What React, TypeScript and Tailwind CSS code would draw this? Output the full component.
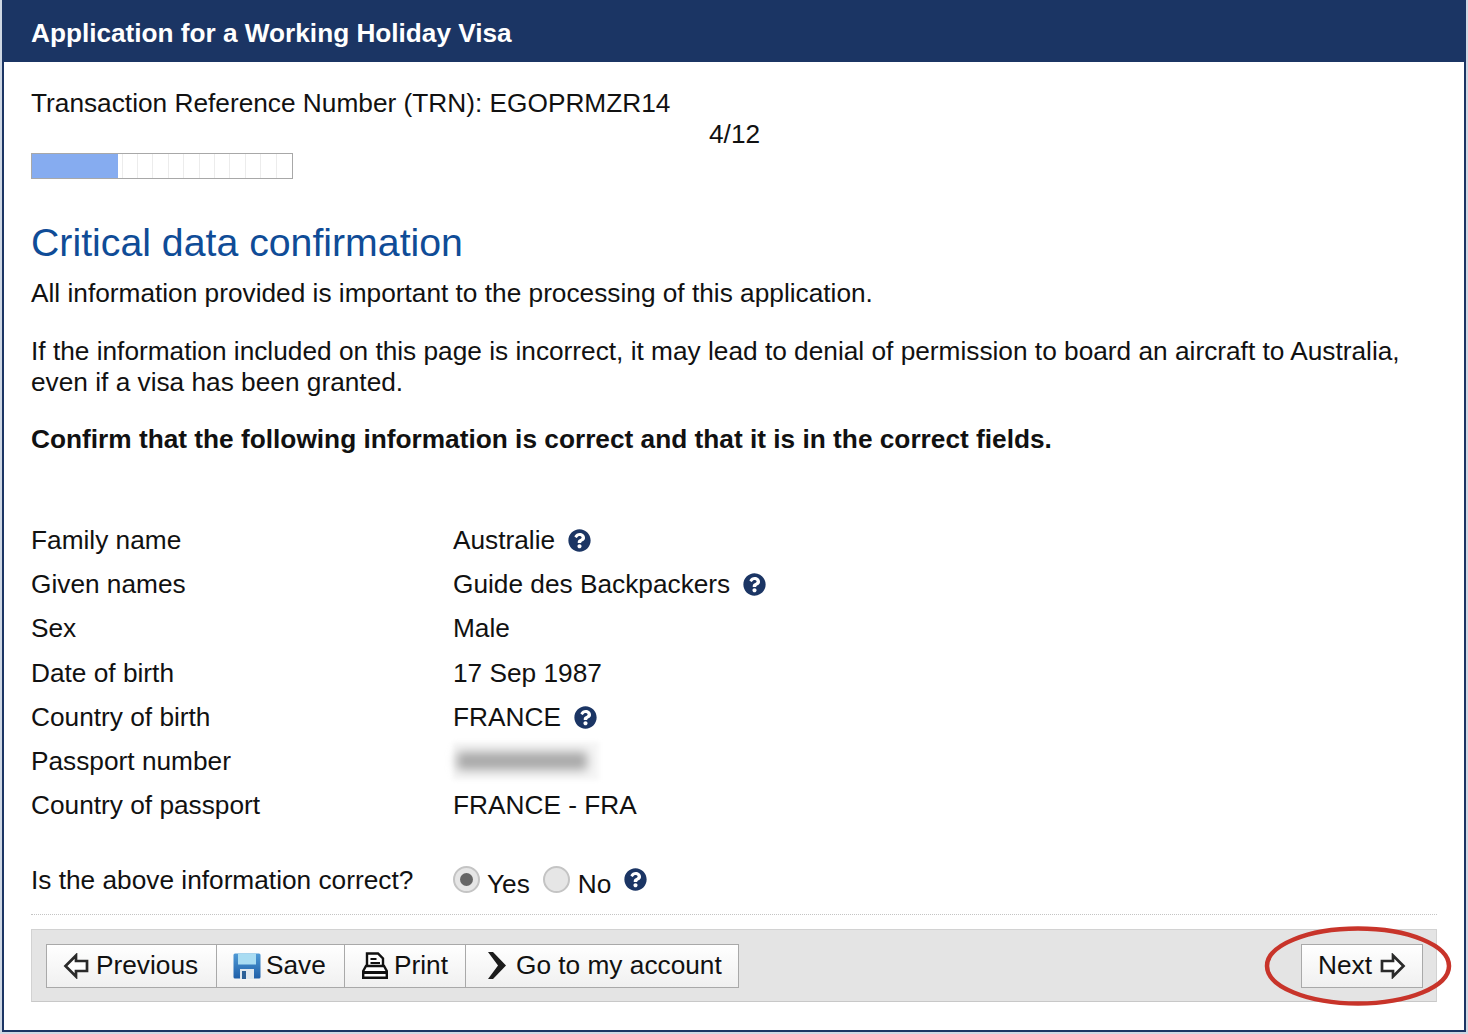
import { FaQuestionCircle } from 'react-icons/fa';

const rows: { label: string; value?: string; help?: boolean }[] = [
  { label: 'Family name', value: 'Australie', help: true },
  { label: 'Given names', value: 'Guide des Backpackers', help: true },
  { label: 'Sex', value: 'Male' },
  { label: 'Date of birth', value: '17 Sep 1987' },
  { label: 'Country of birth', value: 'FRANCE', help: true },
  { label: 'Passport number' },
  { label: 'Country of passport', value: 'FRANCE - FRA' },
];

function Help() {
  return <FaQuestionCircle className="w-[23px] h-[23px] text-[#1b3564] shrink-0" />;
}

function ArrowLeft() {
  return (
    <svg viewBox="0 0 26 26" className="w-[26px] h-[26px] shrink-0">
      <path d="M13 2.5 L2.5 13 L13 23.5 V18 H24 V8 H13 Z" fill="#fff" stroke="#2a2a2a" strokeWidth="2.7" />
    </svg>
  );
}

function ArrowRight() {
  return (
    <svg viewBox="0 0 26 26" className="w-[26px] h-[26px] shrink-0">
      <path d="M13 2.5 L23.5 13 L13 23.5 V18 H2 V8 H13 Z" fill="#fff" stroke="#2a2a2a" strokeWidth="2.7" />
    </svg>
  );
}

function SaveIcon() {
  return (
    <svg viewBox="0 0 28 26" className="w-[28px] h-[26px] shrink-0">
      <defs>
        <linearGradient id="saveBody" x1="0" y1="0" x2="0" y2="1">
          <stop offset="0" stopColor="#4f9ad6" />
          <stop offset="1" stopColor="#1f5fa8" />
        </linearGradient>
      </defs>
      <rect x="0.5" y="0.5" width="27" height="25" rx="1.5" fill="url(#saveBody)" />
      <rect x="5" y="0.5" width="18" height="11" fill="#a9dcf2" />
      <rect x="7" y="16" width="14" height="10" fill="#dfe7ee" />
      <rect x="9" y="18" width="4" height="8" fill="#2a5f97" />
    </svg>
  );
}

function PrintIcon() {
  return (
    <svg viewBox="0 0 28 27" className="w-[28px] h-[27px] shrink-0" fill="none" stroke="#111">
      <path d="M6 14 V1.5 H17 L22 6.5 V14" fill="#fff" strokeWidth="2.4" />
      <path d="M9.5 7 H15.5 M9.5 11 H19" strokeWidth="1.8" />
      <path d="M2.2 19 L5 14 H23 L25.8 19 V25.8 H2.2 Z" fill="#fff" strokeWidth="2.4" />
      <path d="M2.2 20.5 H25.8" strokeWidth="3" />
    </svg>
  );
}

function ChevronIcon() {
  return (
    <svg viewBox="0 0 18 27" className="w-[18px] h-[27px] shrink-0">
      <path d="M0 0 H5 L18 13.5 L5 27 H0 L10 13.5 Z" fill="#1c1c1c" />
    </svg>
  );
}

function Radio({ checked }: { checked?: boolean }) {
  return (
    <span className="w-[27px] h-[27px] rounded-full border-2 border-[#c4c4c4] bg-[#e6e6e6] flex items-center justify-center shrink-0">
      {checked && <span className="w-[13px] h-[13px] rounded-full bg-[#666]" />}
    </span>
  );
}

function ToolButton({ children, className }: { children: React.ReactNode; className: string }) {
  return (
    <div className={`h-[44px] flex items-center border border-[#a9a9a9] bg-gradient-to-b from-white to-[#f0f0f0] ${className}`}>
      {children}
    </div>
  );
}

export default function App() {
  return (
    <div className="h-[1034px] bg-[#cfd8e4] px-[2px] pb-[2px]">
      <div className="h-full bg-white border-x-[2px] border-b-[2px] border-[#1b3564] text-[26.25px] leading-[31px] text-[#111] overflow-hidden" style={{ fontFamily: '"Liberation Sans", Arial, sans-serif' }}>
        <div className="h-[62px] bg-[#1b3564] flex items-center pl-[27px] pt-[5px] text-white font-bold text-[26.2px]">
          Application for a Working Holiday Visa
        </div>
        <div className="px-[27px]">
          <p className="mt-[26px]">Transaction Reference Number (TRN): EGOPRMZR14</p>
          <p className="pl-[678px]">4/12</p>
          <div className="mt-[3px] w-[262px] h-[26px] border border-[#a8a8a8] flex">
            <div className="w-[86px] bg-[#86acf0]" />
            <div className="flex-1 grid grid-cols-[5px_repeat(11,15.4px)] divide-x divide-[#ececec]">
              {Array.from({ length: 12 }).map((_, i) => (
                <div key={i} />
              ))}
            </div>
          </div>
          <h1 className="mt-[41px] text-[39.25px] leading-[44px] text-[#0f4c97]">Critical data confirmation</h1>
          <p className="mt-[14px]">All information provided is important to the processing of this application.</p>
          <p className="mt-[27px]">
            If the information included on this page is incorrect, it may lead to denial of permission to board an aircraft to Australia,
            <br />
            even if a visa has been granted.
          </p>
          <p className="mt-[26px] font-bold">Confirm that the following information is correct and that it is in the correct fields.</p>

          <div className="mt-[63.4px] flex flex-col">
            {rows.map((r) => (
              <div key={r.label} className="h-[44.2px] flex items-center">
                <div className="w-[422px]">{r.label}</div>
                {r.value ? (
                  <div className="flex items-center gap-[13px]">
                    <span>{r.value}</span>
                    {r.help && <Help />}
                  </div>
                ) : (
                  <div className="w-[146px] h-[38px] bg-[#f6f6f6] blur-[2px] flex items-center px-[4px]">
                    <div className="w-[130px] h-[18px] bg-[#a8a8a8] blur-[5px]" />
                  </div>
                )}
              </div>
            ))}
          </div>

          <div className="mt-[34.6px] flex items-center h-[36px]">
            <div className="w-[422px]">Is the above information correct?</div>
            <span className="-mt-[2px]"><Radio checked /></span>
            <span className="ml-[7px] mt-[9px]">Yes</span>
            <span className="ml-[13px] -mt-[2px]"><Radio /></span>
            <span className="ml-[8px] mt-[9px]">No</span>
            <span className="ml-[13px] -mt-[2px]"><Help /></span>
          </div>

          <div className="mt-[16px] border-t border-dotted border-[#c4c4c4]" />

          <div className="relative mt-[14px] h-[73px] bg-[#e4e4e4] border border-[#d2d2d2] border-b-[#c8c8c8] pl-[14px] pr-[13px] flex items-center justify-between">
            <div className="flex">
              <ToolButton className="w-[171px] pl-[16px] gap-[7px]"><ArrowLeft /><span>Previous</span></ToolButton>
              <ToolButton className="w-[128px] pl-[16px] gap-[5px] border-l-0"><SaveIcon /><span>Save</span></ToolButton>
              <ToolButton className="w-[121px] pl-[16px] gap-[5px] border-l-0"><PrintIcon /><span>Print</span></ToolButton>
              <ToolButton className="w-[273px] pl-[22px] gap-[10px] border-l-0"><ChevronIcon /><span>Go to my account</span></ToolButton>
            </div>
            <ToolButton className="w-[122px] pl-[16px] gap-[8px]"><span>Next</span><ArrowRight /></ToolButton>
            <svg viewBox="0 0 190 84" className="absolute right-[-18px] top-[-5px] w-[190px] h-[84px] overflow-visible pointer-events-none">
              <ellipse cx="94" cy="41" rx="91" ry="37.5" fill="none" stroke="#c8342a" strokeWidth="4.5" />
            </svg>
          </div>
        </div>
      </div>
    </div>
  );
}
